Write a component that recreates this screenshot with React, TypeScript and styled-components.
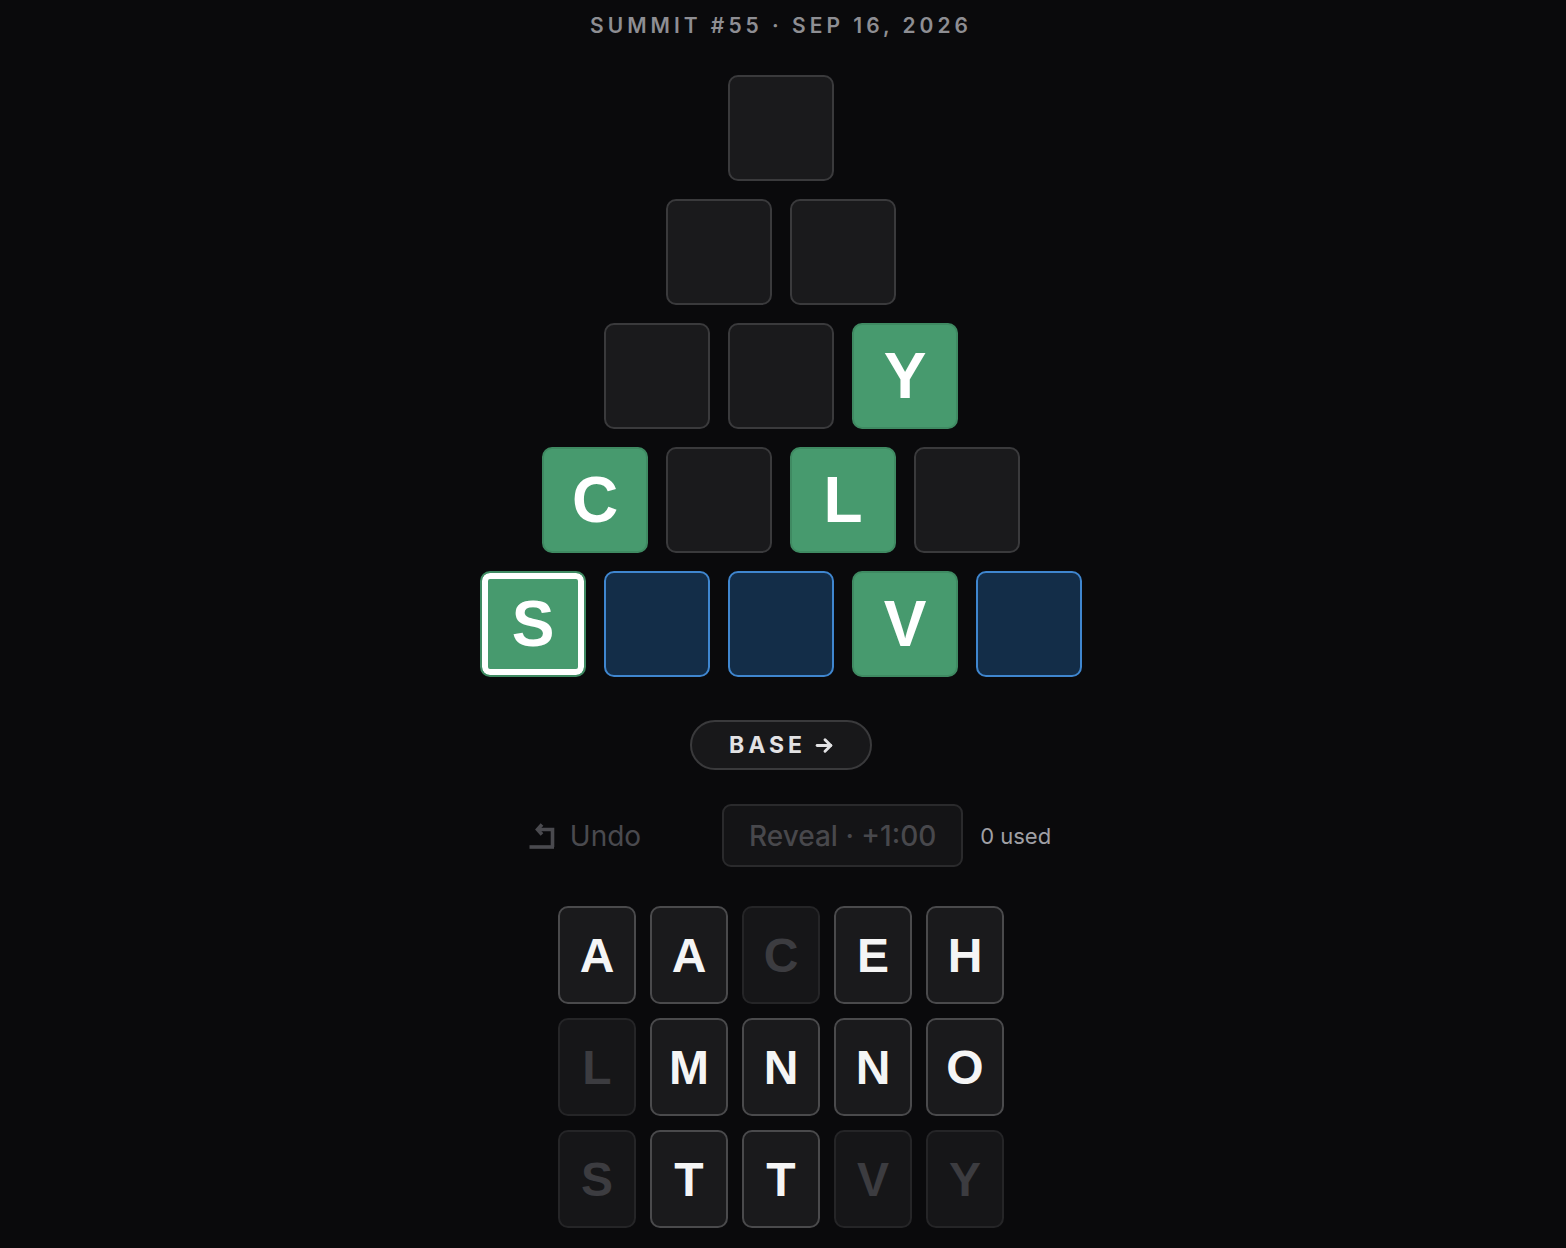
import React from 'react';
import styled, {createGlobalStyle, css} from 'styled-components';

const GlobalStyle = createGlobalStyle`
	html, body {
		margin: 0;
		padding: 0;
		background: #0a0a0c;
	}
	body {
		font-family: Inter, 'Liberation Sans', sans-serif;
	}
`;

type TileKind = 'empty' | 'green' | 'blue' | 'selected';

interface Cell {
	kind: TileKind;
	letter?: string;
}

const pyramid: Cell[][] = [
	[{kind: 'empty'}],
	[{kind: 'empty'}, {kind: 'empty'}],
	[{kind: 'empty'}, {kind: 'empty'}, {kind: 'green', letter: 'Y'}],
	[{kind: 'green', letter: 'C'}, {kind: 'empty'}, {kind: 'green', letter: 'L'}, {kind: 'empty'}],
	[
		{kind: 'selected', letter: 'S'},
		{kind: 'blue'},
		{kind: 'blue'},
		{kind: 'green', letter: 'V'},
		{kind: 'blue'},
	],
];

const keys: {letter: string; used: boolean}[][] = [
	[{letter: 'A', used: false}, {letter: 'A', used: false}, {letter: 'C', used: true}, {letter: 'E', used: false}, {letter: 'H', used: false}],
	[{letter: 'L', used: true}, {letter: 'M', used: false}, {letter: 'N', used: false}, {letter: 'N', used: false}, {letter: 'O', used: false}],
	[{letter: 'S', used: true}, {letter: 'T', used: false}, {letter: 'T', used: false}, {letter: 'V', used: true}, {letter: 'Y', used: true}],
];

const Page = styled.div`
	display: flex;
	flex-direction: column;
	align-items: center;
	padding: 12px 4px 0 0;
	min-height: 100vh;
	box-sizing: border-box;
`;

const Header = styled.div`
	font-size: 21px;
	line-height: 28px;
	font-weight: 600;
	letter-spacing: 4px;
	color: #8e8e93;
	text-transform: uppercase;
`;

const Pyramid = styled.div`
	display: flex;
	flex-direction: column;
	align-items: center;
	gap: 18px;
	margin-top: 35px;
`;

const PyramidRow = styled.div`
	display: flex;
	gap: 18px;
`;

const tileStyles = {
	empty: css`
		background: #1a1a1c;
		border-color: #3a3a3c;
	`,
	green: css`
		background: #479a6e;
		border-color: #3f8a62;
	`,
	blue: css`
		background: #132d48;
		border-color: #3f86cf;
	`,
	selected: css`
		background: #479a6e;
		border-color: #3f8a62;
		box-shadow: inset 0 0 0 6px #ffffff;
	`,
};

const Tile = styled.div<{$kind: TileKind}>`
	width: 106px;
	height: 106px;
	box-sizing: border-box;
	border: 2px solid;
	border-radius: 10px;
	display: flex;
	align-items: center;
	justify-content: center;
	font-family: 'Liberation Sans', Arial, sans-serif;
	font-weight: 700;
	font-size: 64px;
	color: #ffffff;
	${(p) => tileStyles[p.$kind]}
`;

const BaseButton = styled.button`
	margin-top: 43px;
	width: 182px;
	height: 50px;
	border-radius: 25px;
	border: 2px solid #3a3a3c;
	background: #18181a;
	color: #e2e2e4;
	font-family: Inter, 'Liberation Sans', sans-serif;
	font-size: 23px;
	font-weight: 700;
	letter-spacing: 4px;
	display: flex;
	align-items: center;
	justify-content: center;
	gap: 8px;
	padding: 0 0 0 2px;
	cursor: pointer;
`;

const ActionRow = styled.div`
	display: flex;
	align-items: center;
	margin-top: 34px;
	padding-left: 17px;
`;

const UndoButton = styled.button`
	display: flex;
	align-items: center;
	gap: 14px;
	background: none;
	border: none;
	padding: 0;
	margin-right: 81px;
	color: #4a4a4f;
	font-family: Inter, 'Liberation Sans', sans-serif;
	font-size: 28px;
	cursor: default;
`;

const RevealButton = styled.button`
	width: 241px;
	height: 63px;
	box-sizing: border-box;
	border: 2px solid #2a2a2c;
	border-radius: 9px;
	background: #141416;
	color: #48484c;
	font-family: Inter, 'Liberation Sans', sans-serif;
	font-size: 28px;
	font-weight: 500;
	cursor: default;
`;

const UsedText = styled.span`
	margin-left: 17px;
	color: #a0a0a5;
	font-size: 22px;
`;

const Keyboard = styled.div`
	display: flex;
	flex-direction: column;
	gap: 14px;
	margin-top: 39px;
	padding-bottom: 20px;
`;

const KeyRow = styled.div`
	display: flex;
	gap: 14px;
`;

const Key = styled.button<{$used: boolean}>`
	width: 78px;
	height: 98px;
	box-sizing: border-box;
	border-radius: 10px;
	border: 2px solid ${(p) => (p.$used ? '#252527' : '#4a4a4c')};
	background: ${(p) => (p.$used ? '#161618' : '#1a1a1c')};
	color: ${(p) => (p.$used ? '#3c3c40' : '#f5f5f5')};
	font-family: 'Liberation Sans', Arial, sans-serif;
	font-weight: 700;
	font-size: 48px;
	display: flex;
	align-items: center;
	justify-content: center;
	padding: 0;
`;

function UndoIcon() {
	return (
		<svg width="28" height="28" viewBox="0 0 28 28" fill="none" stroke="currentColor" strokeWidth="3.6" strokeLinecap="butt" strokeLinejoin="miter">
			<path d="M14 2.5 L9.5 7.5 L14 12.5" />
			<path d="M10 7.5 H24.5 V25" />
			<path d="M1.5 25 H26" />
		</svg>
	);
}

function ArrowIcon() {
	return (
		<svg width="21" height="21" viewBox="0 0 20 20" fill="none" stroke="currentColor" strokeWidth="2.8" strokeLinecap="round" strokeLinejoin="round">
			<path d="M3 10 H16" />
			<path d="M10.5 4.5 L16 10 L10.5 15.5" />
		</svg>
	);
}

export default function App() {
	return (
		<>
			<GlobalStyle />
			<Page>
				<Header>Summit #55 · Sep 16, 2026</Header>
				<Pyramid>
					{pyramid.map((row, i) => (
						<PyramidRow key={i}>
							{row.map((cell, j) => (
								<Tile key={j} $kind={cell.kind}>
									{cell.letter}
								</Tile>
							))}
						</PyramidRow>
					))}
				</Pyramid>
				<BaseButton>
					BASE <ArrowIcon />
				</BaseButton>
				<ActionRow>
					<UndoButton>
						<UndoIcon />
						Undo
					</UndoButton>
					<RevealButton>Reveal · +1:00</RevealButton>
					<UsedText>0 used</UsedText>
				</ActionRow>
				<Keyboard>
					{keys.map((row, i) => (
						<KeyRow key={i}>
							{row.map((k, j) => (
								<Key key={j} $used={k.used}>
									{k.letter}
								</Key>
							))}
						</KeyRow>
					))}
				</Keyboard>
			</Page>
		</>
	);
}
